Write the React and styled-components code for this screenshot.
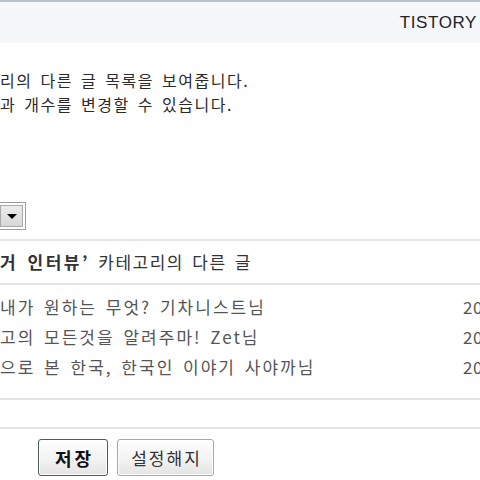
import React from "react";
import styled, { createGlobalStyle } from "styled-components";

const Global = createGlobalStyle`
  html, body { margin: 0; padding: 0; background: #fff; }
  body { font-family: "Noto Sans CJK KR", "Noto Sans", sans-serif; }
  p { margin: 0; }
`;

const Page = styled.div`
  width: 480px;
  height: 480px;
  overflow: hidden;
  background: #fff;
`;

const Header = styled.header`
  height: 41px;
  border-top: 2px solid #b9c1cd;
  background: #f6f7fb;
  display: flex;
  align-items: center;
  justify-content: flex-end;
  padding-right: 3px;
`;

const Brand = styled.span`
  font-family: "Liberation Sans", Arial, sans-serif;
  font-size: 17px;
  letter-spacing: 0.6px;
  color: #222;
`;

const Desc = styled.div`
  padding-top: 25px;
  font-size: 16px;
  line-height: 24px;
  letter-spacing: 1.5px;
  word-spacing: 3px;
  color: #2a2a2a;
`;

const SelectEnd = styled.div`
  margin-top: 86px;
  width: 23px;
  height: 22px;
  border: 1px solid #9c9c9c;
  border-left: none;
  padding: 2px 2px 2px 0;
  display: flex;
`;

const ArrowButton = styled.div`
  flex: 1;
  border: 1px solid #a9a9a9;
  background: linear-gradient(#ececec, #d8d8d8);
  display: flex;
  align-items: center;
  justify-content: center;
  &::after {
    content: "";
    border-left: 5px solid transparent;
    border-right: 5px solid transparent;
    border-top: 5px solid #000;
  }
`;

const Preview = styled.section`
  margin-top: 9px;
  border-top: 2px solid #e4e4e4;
  border-bottom: 2px solid #e4e4e4;
  margin-right: -60px;
`;

const PreviewTitle = styled.h3`
  margin: 0;
  height: 42px;
  line-height: 42px;
  font-size: 17px;
  font-weight: 400;
  letter-spacing: 1.5px;
  word-spacing: 3px;
  color: #333;
  border-bottom: 2px solid #e4e4e4;
  white-space: nowrap;
`;

const Strong = styled.strong`
  font-weight: 700;
  letter-spacing: 2.5px;
  word-spacing: 3px;
  color: #333;
`;

const List = styled.ul`
  list-style: none;
  margin: 0;
  padding: 7px 0 16px;
`;

const Row = styled.li`
  display: grid;
  grid-template-columns: 1fr 77px;
  height: 30px;
  line-height: 30px;
  font-size: 17px;
  letter-spacing: 2px;
  word-spacing: 3px;
  color: #555;
  white-space: nowrap;
`;

const DateCell = styled.span`
  font-size: 17px;
  letter-spacing: 0.5px;
  color: #555;
`;

const Spacer = styled.div`
  height: 27px;
  border-bottom: 2px solid #e6e6e6;
`;

const Buttons = styled.div`
  display: flex;
  gap: 9px;
  padding: 10px 0 0 38px;
`;

const Button = styled.button`
  height: 37px;
  padding: 0;
  width: ${(p) => (p.$primary ? "70px" : "97px")};
  border-radius: 3px;
  border: 1px solid ${(p) => (p.$primary ? "#4d5c5c" : "#a9a9a9")};
  background: linear-gradient(#ffffff, #f1f1f1 60%, #e4e4e4);
  font-family: "Noto Sans CJK KR", sans-serif;
  font-size: ${(p) => (p.$primary ? "18px" : "17px")};
  font-weight: ${(p) => (p.$primary ? 700 : 400)};
  letter-spacing: ${(p) => (p.$primary ? "3px" : "2px")};
  text-indent: ${(p) => (p.$primary ? "3px" : "2px")};
  color: ${(p) => (p.$primary ? "#111" : "#333")};
  box-shadow: inset 0 0 0 1px #fff;
`;

const posts = [
  { title: "내가 원하는 무엇? 기차니스트님", date: "2008.04.12" },
  { title: "고의 모든것을 알려주마! Zet님", date: "2008.03.28" },
  { title: "으로 본 한국, 한국인 이야기 사야까님", date: "2008.03.14" },
];

export default function App() {
  return (
    <Page>
      <Global />
      <Header>
        <Brand>TISTORY</Brand>
      </Header>
      <Desc>
        <p>리의 다른 글 목록을 보여줍니다.</p>
        <p>과 개수를 변경할 수 있습니다.</p>
      </Desc>
      <SelectEnd>
        <ArrowButton />
      </SelectEnd>
      <Preview>
        <PreviewTitle>
          <Strong>거 인터뷰’</Strong> 카테고리의 다른 글
        </PreviewTitle>
        <List>
          {posts.map((p) => (
            <Row key={p.title}>
              <span>{p.title}</span>
              <DateCell>{p.date}</DateCell>
            </Row>
          ))}
        </List>
      </Preview>
      <Spacer />
      <Buttons>
        <Button $primary>저장</Button>
        <Button>설정해지</Button>
      </Buttons>
    </Page>
  );
}
